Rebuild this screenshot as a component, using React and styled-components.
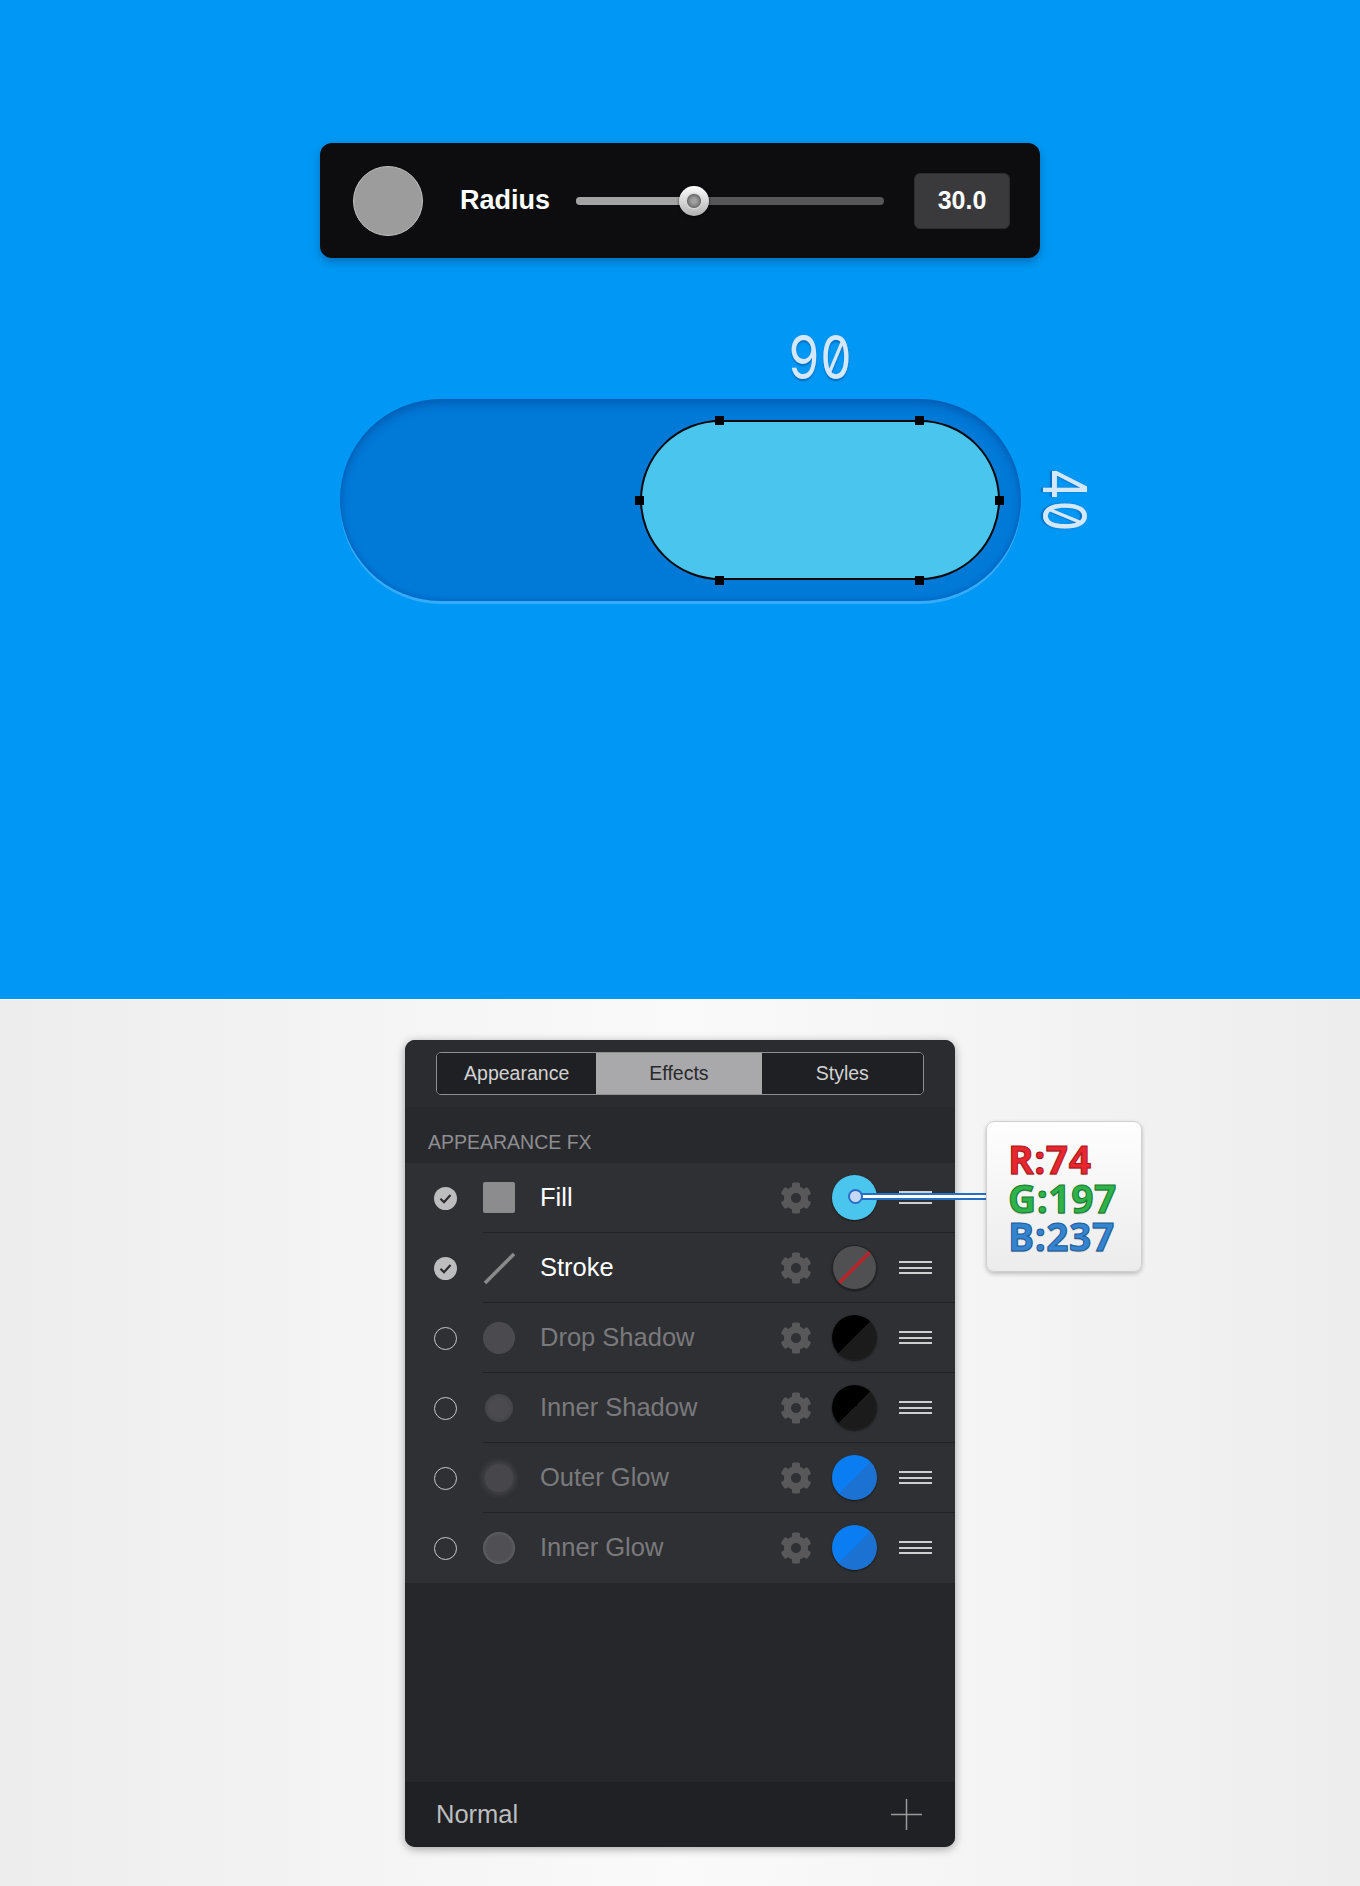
import React from "react";
import styled, { createGlobalStyle, css } from "styled-components";
import { FaCog } from "react-icons/fa";

const GlobalStyle = createGlobalStyle`
  html, body { margin: 0; padding: 0; }
  body { font-family: "Liberation Sans", Arial, sans-serif; background: #f2f2f2; }
  * { box-sizing: border-box; }
`;

const Page = styled.div`
  width: 1360px;
  display: flex;
  flex-direction: column;
`;

/* ---------- top stage ---------- */
const Stage = styled.section`
  height: 999px;
  background: #0098f4;
  display: flex;
  flex-direction: column;
  align-items: center;
  padding-top: 143px;
`;

const Toolbar = styled.div`
  width: 720px;
  height: 115px;
  background: #0d0d0f;
  border-radius: 12px;
  box-shadow: 0 4px 8px rgba(0, 40, 90, 0.35);
  display: flex;
  align-items: center;
  padding: 0 30px 0 33px;
`;

const Preview = styled.div`
  flex: none;
  width: 70px;
  height: 70px;
  border-radius: 50%;
  background: #9c9c9c;
  border: 1.5px solid #c2c2c2;
`;

const ToolLabel = styled.span`
  margin-left: 37px;
  font-weight: 700;
  font-size: 27px;
  color: #fff;
`;

const Slider = styled.div`
  flex: none;
  position: relative;
  margin-left: 26px;
  width: 308px;
  height: 8px;
  border-radius: 4px;
  background: #565658;
`;

const SliderFill = styled.div`
  height: 100%;
  width: ${(p) => p.$percent}%;
  border-radius: 4px;
  background: #a3a3a3;
`;

const Thumb = styled.div`
  position: absolute;
  top: 50%;
  left: ${(p) => p.$percent}%;
  width: 30px;
  height: 30px;
  margin: -15px 0 0 -15px;
  border-radius: 50%;
  background: radial-gradient(circle at 50% 50%, #a0a0a0 0 2px, #858585 5px, #6a6a6a 6.5px, #d8d8d8 7.5px, transparent 9px),
    linear-gradient(#fefefe, #b0b0b0);
  box-shadow: 0 1px 3px rgba(0, 0, 0, 0.7);
`;

const ValueBox = styled.div`
  margin-left: auto;
  width: 96px;
  height: 56px;
  border-radius: 6px;
  background: #3a3a3c;
  border: 1px solid #2c2c2e;
  display: flex;
  align-items: center;
  justify-content: center;
  font-weight: 700;
  font-size: 25px;
  color: #fff;
`;

const Canvas = styled.div`
  position: relative;
  margin-top: 141px;
  width: 681px;
  height: 202px;
`;

const OuterPill = styled.div`
  width: 100%;
  height: 100%;
  border-radius: 101px;
  background: #0079d7;
  box-shadow: inset 0 5px 9px rgba(0, 45, 120, 0.35), inset 0 -2px 4px rgba(0, 60, 140, 0.2),
    0 3px 0 rgba(95, 190, 255, 0.55);
  display: flex;
  align-items: center;
  justify-content: flex-end;
  padding-right: 21px;
`;

const InnerPill = styled.div`
  position: relative;
  width: 360px;
  height: 160px;
  border-radius: 80px;
  background: #4ac5ed;
  border: 2px solid #0a0a0a;
`;

const Handle = styled.span`
  position: absolute;
  left: ${(p) => p.$x - 2 - 4.5}px;
  top: ${(p) => p.$y - 2 - 4.5}px;
  width: 9px;
  height: 9px;
  background: #000;
`;

const DimLabel = styled.span`
  position: absolute;
  font-family: Inter, "DejaVu Sans", sans-serif;
  font-feature-settings: "zero" 1, "tnum" 1;
  font-size: 60px;
  line-height: 1;
  color: #d3e8fb;
  text-shadow: 0 0 1px #3d92da, 0 2px 2px rgba(0, 50, 120, 0.45);
  white-space: nowrap;
  ${(p) =>
    p.$vertical
      ? css`
          left: calc(100% + 44px);
          top: 50%;
          transform: translate(-50%, -50%) rotate(90deg) scaleX(0.82);
        `
      : css`
          left: 480px;
          top: -42px;
          transform: translate(-50%, -50%) scaleX(0.82);
        `}
`;

/* ---------- bottom workspace ---------- */
const Workspace = styled.section`
  height: 887px;
  border-top: 1px solid rgba(255, 255, 255, 0.8);
  background: linear-gradient(to right, #ededed 0%, #f5f5f5 30%, #fafafa 50%, #f5f5f5 70%, #ededed 100%);
  display: flex;
  justify-content: center;
  padding-top: 40px;
`;

const PanelWrap = styled.div`
  position: relative;
  width: 550px;
  height: 807px;
`;

const Panel = styled.div`
  height: 100%;
  border-radius: 10px;
  overflow: hidden;
  display: flex;
  flex-direction: column;
  background: #26272b;
  box-shadow: 0 2px 10px rgba(0, 0, 0, 0.35);
`;

const Header = styled.div`
  height: 67px;
  background: #2b2c30;
  padding: 12px 31px 0;
`;

const Tabs = styled.div`
  display: flex;
  height: 43px;
  border: 1px solid #8e8e90;
  border-radius: 5px;
  overflow: hidden;
`;

const Tab = styled.div`
  flex: ${(p) => p.$grow};
  display: flex;
  align-items: center;
  justify-content: center;
  font-size: 19.5px;
  background: ${(p) => (p.$active ? "#a9a9ab" : "#1f2023")};
  color: ${(p) => (p.$active ? "#2a2a2c" : "#d2d2d2")};
`;

const SectionLabel = styled.div`
  height: 56px;
  padding: 24px 0 0 23px;
  font-size: 19.5px;
  line-height: 22px;
  color: #8e8e91;
  background: #28292d;
`;

const RowList = styled.div`
  background: #2f3034;
`;

const Row = styled.div`
  height: 70px;
  display: flex;
  align-items: stretch;
`;

const CheckCell = styled.div`
  flex: none;
  width: 78px;
  display: flex;
  align-items: center;
  padding-left: 29px;
`;

const Check = styled.div`
  width: 23px;
  height: 23px;
  border-radius: 50%;
  display: flex;
  align-items: center;
  justify-content: center;
  ${(p) =>
    p.$on
      ? css`
          background: #bdbdbf;
        `
      : css`
          border: 1.5px solid #c9c9cb;
        `}
`;

const RowBody = styled.div`
  flex: 1;
  display: flex;
  align-items: center;
  padding-right: 23px;
  border-bottom: 1px solid ${(p) => (p.$last ? "transparent" : "#222327")};
`;

const IconSlot = styled.div`
  flex: none;
  width: 32px;
  height: 32px;
  display: flex;
  align-items: center;
  justify-content: center;
`;

const Square = styled.div`
  width: 32px;
  height: 31px;
  border-radius: 2px;
  background: #8c8c8e;
`;

const Disc = styled.div`
  border-radius: 50%;
  ${(p) => {
    switch (p.$kind) {
      case "drop":
        return css`
          width: 32px;
          height: 32px;
          background: #4b4b4f;
        `;
      case "inner":
        return css`
          width: 28px;
          height: 28px;
          background: radial-gradient(circle, #4b4b4f 45%, #3d3e42 100%);
          filter: blur(0.6px);
        `;
      case "outer":
        return css`
          width: 28px;
          height: 28px;
          background: #47474b;
          box-shadow: 0 0 5px 3px rgba(72, 72, 76, 0.75);
        `;
      default:
        return css`
          width: 32px;
          height: 32px;
          background: #505054;
          box-shadow: inset 0 0 4px rgba(130, 130, 134, 0.6);
        `;
    }
  }}
`;

const RowName = styled.div`
  flex: 1;
  margin-left: 25px;
  font-size: 25.5px;
  color: ${(p) => (p.$on ? "#ffffff" : "#7a7a7d")};
`;

const Gear = styled.div`
  flex: none;
  width: 32px;
  height: 32px;
  color: #58585b;
  display: flex;
  align-items: center;
  justify-content: center;
`;

const Swatch = styled.div`
  flex: none;
  margin-left: 20px;
  width: 45px;
  height: 45px;
  border-radius: 50%;
  box-shadow: 0 1px 2px rgba(0, 0, 0, 0.55);
  ${(p) =>
    p.$kind === "none"
      ? css`
          background: linear-gradient(
            135deg,
            #505053 calc(50% - 1.6px),
            #b3262c calc(50% - 1.6px),
            #b3262c calc(50% + 1.6px),
            #505053 calc(50% + 1.6px)
          );
          border: 1px solid #232326;
        `
      : css`
          background: linear-gradient(135deg, ${p.$a} 50%, ${p.$b} 50%);
        `}
`;

const Grip = styled.div`
  flex: none;
  margin-left: 22px;
  width: 33px;
  display: flex;
  flex-direction: column;
  gap: 3.5px;
`;

const GripBar = styled.span`
  display: block;
  height: 2px;
  background: #cfcfd1;
`;

const Empty = styled.div`
  flex: 1;
  background: #26272b;
`;

const Footer = styled.div`
  height: 65px;
  background: #202124;
  display: flex;
  align-items: center;
  justify-content: space-between;
  padding: 0 33px 0 31px;
  font-size: 25.5px;
  color: #bdbdbf;
`;

const Connector = styled.div`
  position: absolute;
  left: 457px;
  top: 153px;
  width: 130px;
  height: 7px;
  background: linear-gradient(#2470c4 0 2px, #ffffff 2px 5px, #2470c4 5px 7px);
`;

const Dot = styled.div`
  position: absolute;
  left: 443px;
  top: 149px;
  width: 15px;
  height: 15px;
  border-radius: 50%;
  background: #c5d9f6;
  border: 2px solid #2a6fc4;
`;

const Callout = styled.div`
  position: absolute;
  left: 581px;
  top: 81px;
  width: 156px;
  height: 151px;
  padding: 18px 0 0 21px;
  border-radius: 8px;
  border: 1px solid #cfcfcf;
  background: linear-gradient(#fefefe, #ececec);
  box-shadow: 0 2px 4px rgba(0, 0, 0, 0.22);
  display: flex;
  flex-direction: column;
`;

const Channel = styled.div`
  height: 38.5px;
  display: flex;
  align-items: center;
  font-family: "Open Sans", Roboto, sans-serif;
  font-weight: 700;
  font-size: 39px;
  line-height: 38.5px;
  color: ${(p) => p.$color};
  -webkit-text-stroke: 1px ${(p) => p.$edge};
  text-shadow: 0 1px 1px rgba(0, 0, 0, 0.3);
  letter-spacing: 0.5px;
`;

const effects = [
  { name: "Fill", on: true, icon: "square", swatch: { a: "#4ac5ed", b: "#4ac5ed" } },
  { name: "Stroke", on: true, icon: "stroke", swatch: { kind: "none" } },
  { name: "Drop Shadow", on: false, icon: "drop", swatch: { a: "#000000", b: "#1b1b1c" } },
  { name: "Inner Shadow", on: false, icon: "inner", swatch: { a: "#000000", b: "#1b1b1c" } },
  { name: "Outer Glow", on: false, icon: "outer", swatch: { a: "#0a7df2", b: "#1b72d2" } },
  { name: "Inner Glow", on: false, icon: "glow", swatch: { a: "#0a7df2", b: "#1b72d2" } },
];

function EffectIcon({ kind }) {
  if (kind === "square") return <Square />;
  if (kind === "stroke")
    return (
      <svg width="32" height="32" viewBox="0 0 32 32">
        <line x1="2" y1="31" x2="31" y2="2" stroke="#8a8a8c" strokeWidth="3.5" />
      </svg>
    );
  return <Disc $kind={kind} />;
}

const handles = [
  [80, 0],
  [280, 0],
  [0, 80],
  [360, 80],
  [80, 160],
  [280, 160],
];

export default function App() {
  const radius = 30;
  const percent = (radius / 78.3) * 100;
  return (
    <Page>
      <GlobalStyle />
      <Stage>
        <Toolbar>
          <Preview />
          <ToolLabel>Radius</ToolLabel>
          <Slider>
            <SliderFill $percent={percent} />
            <Thumb $percent={percent} />
          </Slider>
          <ValueBox>{radius.toFixed(1)}</ValueBox>
        </Toolbar>
        <Canvas>
          <OuterPill>
            <InnerPill>
              {handles.map(([x, y], i) => (
                <Handle key={i} $x={x} $y={y} />
              ))}
            </InnerPill>
          </OuterPill>
          <DimLabel>90</DimLabel>
          <DimLabel $vertical>40</DimLabel>
        </Canvas>
      </Stage>
      <Workspace>
        <PanelWrap>
          <Panel>
            <Header>
              <Tabs>
                <Tab $grow={160}>Appearance</Tab>
                <Tab $grow={166} $active>Effects</Tab>
                <Tab $grow={162}>Styles</Tab>
              </Tabs>
            </Header>
            <SectionLabel>APPEARANCE FX</SectionLabel>
            <RowList>
              {effects.map((e, i) => (
                <Row key={e.name}>
                  <CheckCell>
                    <Check $on={e.on}>
                      {e.on && (
                        <svg width="23" height="23" viewBox="0 0 23 23">
                          <polyline
                            points="6.5,11.8 10,15.2 16.5,8"
                            fill="none"
                            stroke="#2a2b2f"
                            strokeWidth="2.2"
                          />
                        </svg>
                      )}
                    </Check>
                  </CheckCell>
                  <RowBody $last={i === effects.length - 1}>
                    <IconSlot>
                      <EffectIcon kind={e.icon} />
                    </IconSlot>
                    <RowName $on={e.on}>{e.name}</RowName>
                    <Gear>
                      <FaCog size={32} />
                    </Gear>
                    <Swatch $kind={e.swatch.kind} $a={e.swatch.a} $b={e.swatch.b} />
                    <Grip>
                      <GripBar />
                      <GripBar />
                      <GripBar />
                    </Grip>
                  </RowBody>
                </Row>
              ))}
            </RowList>
            <Empty />
            <Footer>
              <span>Normal</span>
              <svg width="31" height="31" viewBox="0 0 31 31">
                <line x1="15.5" y1="0" x2="15.5" y2="31" stroke="#9a9a9c" strokeWidth="1.5" />
                <line x1="0" y1="15.5" x2="31" y2="15.5" stroke="#9a9a9c" strokeWidth="1.5" />
              </svg>
            </Footer>
          </Panel>
          <Connector />
          <Dot />
          <Callout>
            <Channel $color="#e8262e" $edge="#a8161c">R:74</Channel>
            <Channel $color="#2db34a" $edge="#177a2c">G:197</Channel>
            <Channel $color="#3584cf" $edge="#1b5c9c">B:237</Channel>
          </Callout>
        </PanelWrap>
      </Workspace>
    </Page>
  );
}
